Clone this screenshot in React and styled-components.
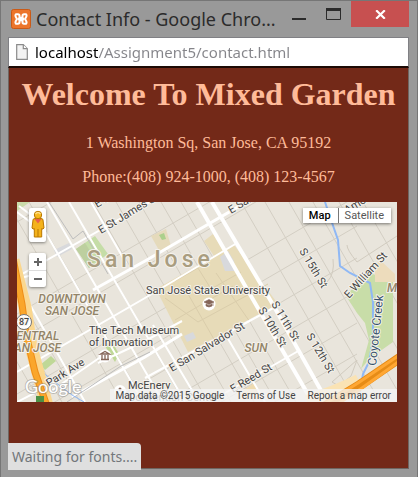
import React, { useState } from "react";
import styled, { createGlobalStyle } from "styled-components";

const GlobalStyle = createGlobalStyle`
  * { box-sizing: border-box; }
  body { margin: 0; background: #999999; }
  button, input { font: inherit; margin: 0; border: 0; padding: 0; }
`;

const Window = styled.div`
  position: relative;
  display: flex;
  flex-direction: column;
  min-height: 100vh;
  padding: 0 8px 8px 7px;
  border: 1px solid #767676;
  background: #999999;
`;

const TitleBar = styled.header`
  display: flex;
  align-items: flex-start;
  height: 36px;
  padding-left: 3px;
`;

const AppIcon = styled.svg`
  flex: none;
  width: 20px;
  height: 20px;
  margin-top: 8px;
`;

const Title = styled.div`
  flex: 1;
  min-width: 0;
  overflow: hidden;
  padding: 5px 0 0 5px;
  font: 18px/26px "Noto Sans", sans-serif;
  white-space: nowrap;
  color: #2b2b2b;
`;

const WindowButton = styled.button`
  flex: none;
  display: flex;
  align-items: center;
  justify-content: center;
  width: ${(p) => (p.$close ? 58 : 35)}px;
  height: 26px;
  background: ${(p) => (p.$close ? "#c75050" : "transparent")};
`;

const AddressBar = styled.form`
  display: flex;
  align-items: center;
  height: 31px;
  padding: 0 7px;
  border: 1px solid #808084;
  border-bottom: 2px solid #1c0a05;
  background: #ffffff;
`;

const AddressInput = styled.input`
  flex: 1;
  min-width: 0;
  margin-left: 7px;
  outline: 0;
  font: 15px/22px "Noto Sans", sans-serif;
  color: transparent;
  background: linear-gradient(90deg, #000000 63px, #85858a 63px);
  background-clip: text;
  -webkit-background-clip: text;
`;

const Page = styled.main`
  flex: 1;
  padding: 8px 8px 66px;
  border: 1px solid #6f6661;
  border-top: 0;
  background: #732918;
  color: #ffbb99;
  font: 16px/18px "Liberation Serif", serif;
  text-align: center;
`;

const Heading = styled.h1`
  margin: 0 -8px 21px;
  font-size: 32px;
  line-height: 37px;
  white-space: nowrap;
`;

const Line = styled.p`
  margin: 0 0 16px;
`;

const MapFrame = styled.section`
  position: relative;
  max-width: 380px;
  height: 200px;
  overflow: hidden;
  background: #e9e5dc;
  color: #444444;
  font: 11px/14px Roboto, sans-serif;
`;

const MapArt = styled.svg`
  display: block;
  width: 380px;
  height: 200px;
`;

const Controls = styled.div`
  position: absolute;
  top: 6px;
  left: 12px;
  display: flex;
  flex-direction: column;
  gap: 11px;
`;

const ControlGroup = styled.div`
  display: flex;
  flex-direction: column;
  width: 17px;
  border-radius: 2px;
  background: #ffffff;
  box-shadow: 0 1px 3px rgba(0, 0, 0, 0.45);
`;

const ControlButton = styled.button`
  display: flex;
  align-items: center;
  justify-content: center;
  height: ${(p) => (p.$tall ? 34 : 17)}px;
  background: transparent;

  & + & { border-top: 1px solid #dddddd; }
`;

const MapTypes = styled.div`
  position: absolute;
  top: 6px;
  right: 6px;
  display: flex;
  background: #ffffff;
  box-shadow: 0 1px 3px rgba(0, 0, 0, 0.5);
`;

const TypeButton = styled.button`
  height: 15px;
  padding: 0 7px 0 6px;
  background: #ffffff;
  color: ${(p) => (p.$active ? "#000000" : "#565656")};
  font-weight: ${(p) => (p.$active ? 500 : 400)};

  & + & { border-left: 1px solid #777777; }
`;

const Credits = styled.footer`
  position: absolute;
  right: 0;
  bottom: 0;
  display: flex;
  gap: 12px;
  padding: 0 6px 0 5px;
  background: rgba(245, 245, 245, 0.78);
  font-size: 10px;
  line-height: 13px;
  white-space: nowrap;
`;

const CreditLink = styled.a`
  color: #444444;
  text-decoration: none;
`;

const Status = styled.div`
  position: absolute;
  left: 7px;
  bottom: 7px;
  padding: 0 4px;
  border-top-right-radius: 4px;
  background: #dfdfdf;
  color: #73777b;
  font: 14px/27px "Noto Sans", sans-serif;
`;

const Block = styled.path`
  fill: ${(p) => p.$fill};
`;

const Road = styled.path`
  fill: none;
  stroke: ${(p) => p.$color || "#ffffff"};
  stroke-width: ${(p) => p.$w || 2};
`;

const MapLabel = styled.text`
  font-family: Roboto, sans-serif;
  font-size: ${(p) => p.$size || 11}px;
  font-weight: ${(p) => p.$weight || 400};
  font-style: ${(p) => (p.$italic ? "italic" : "normal")};
  letter-spacing: ${(p) => (p.$tracked ? "4px" : "normal")};
  fill: ${(p) => p.$fill || "#444444"};
  stroke: #f5f2ec;
  stroke-width: 2px;
  stroke-linejoin: round;
  paint-order: stroke;
`;

const streetLabels = [
  ["E St James St", 84, 32, -31],
  ["E San Fernando St", 214, 12, -31],
  ["E St John St", 80, 6, -31],
  ["S 15th St", 282, 49, 59],
  ["E William St", 332, 97, -48],
  ["S 11th St", 254, 102, 59],
  ["S 10th St", 241, 108, 59],
  ["S 12th St", 289, 134, 59],
  ["E San Salvador St", 155, 170, -31],
  ["E Reed St", 216, 191, -31],
  ["Park Ave", 32, 185, -32],
];

const districtLabels = [
  ["DOWNTOWN", 55, 101],
  ["SAN JOSE", 55, 113],
  ["CENTRAL", 17, 138],
  ["SAN JOSE", 17, 150],
  ["SUN", 239, 150],
];

function XamppIcon() {
  return (
    <AppIcon viewBox="0 0 20 20" aria-hidden="true">
      <rect x="0.5" y="0.5" width="19" height="19" rx="2" fill="#ec752b" stroke="#c95a17" />
      <path
        d="M5 5.2 H7 Q8.5 5.2 8.5 7 V8.8 H11.5 V7 Q11.5 5.2 13 5.2 H15 Q16 6.2 15.4 7.6 L14 10 L15.4 12.4 Q16 13.8 15 14.8 H13 Q11.5 14.8 11.5 13 V11.2 H8.5 V13 Q8.5 14.8 7 14.8 H5 Q4 13.8 4.6 12.4 L6 10 L4.6 7.6 Q4 6.2 5 5.2 Z"
        fill="none"
        stroke="#ffffff"
        strokeWidth="2"
        strokeLinejoin="round"
      />
      <path d="M7 10 H13" stroke="#ffffff" strokeWidth="2.6" />
    </AppIcon>
  );
}

function PageIcon() {
  return (
    <svg width="12" height="16" viewBox="0 0 12 16" aria-hidden="true">
      <path d="M0.7 0.7 H7.3 L11.3 4.7 V15.3 H0.7 Z" fill="#f3f3f3" stroke="#8b8b8b" strokeWidth="1.2" />
      <path d="M7.3 0.7 V4.7 H11.3" fill="#ffffff" stroke="#8b8b8b" strokeWidth="1.2" />
    </svg>
  );
}

function Pegman() {
  return (
    <svg width="14" height="30" viewBox="0 0 14 30" aria-hidden="true">
      <path d="M2 10 Q2 8.5 4 8.5 H10 Q12 8.5 12 10 L13 18 Q12 20 10.7 18.5 V27 H3.3 V18.5 Q2 20 1 18 Z" fill="#f4b21b" stroke="#b97800" />
      <path d="M7 19 V27" stroke="#b97800" />
      <path d="M3.5 9 H10.5 L7 13.5 Z" fill="#e8604c" />
      <circle cx="7" cy="5" r="3.7" fill="#f7b91e" stroke="#b97800" />
      <path d="M4.5 4 Q7 1 9.5 4" fill="none" stroke="#ffe08a" strokeWidth="1.4" />
    </svg>
  );
}

function CityMap() {
  const minorNe = [-40, -10, 20, 112, 139, 192, 222, 254, 287, 319, 350, 382, 410];
  const minorSe = [-92, -70, -52, -10, 12, 52, 76, 99, 122, 144, 164, 224, 248, 272, 296, 322, 346];
  return (
    <MapArt viewBox="0 0 380 200" role="img" aria-label="Map of downtown San Jose">
      <Block $fill="#e9e5dc" d="M0 0H380V200H0Z" />
      {minorNe.map((y) => (
        <Road key={y} $color="#d3cec3" $w={1} d={`M0 ${y} L340 ${y - 198}`} />
      ))}
      {minorSe.map((x) => (
        <Road key={x} $color="#d3cec3" $w={1} d={`M${x} 0 L${x + 115} 200`} />
      ))}
      <Block $fill="#cbdcab" d="M0 0H13L0 9Z" />
      <Block $fill="#c5dda7" d="M59 47L78 34L91 52L72 66Z" />
      <Block $fill="#bdcf9f" d="M59 47L68 41L79 58L72 66Z" />
      <Block $fill="#d8d9dc" d="M37 48L52 41L55 47L40 55Z" />
      <Block $fill="#e5dabb" d="M134 34L149 27L154 44L143 50Z" />
      <path d="M142 33L147 31L149 37L145 38Z" fill="#acd08c" />
      <Block $fill="#e7dbb8" d="M187 39L196 32L210 51L199 57Z" />
      <Block $fill="#e7dbb8" d="M217 43L139 87L171 150L261 102Z" />
      <Block $fill="#d8d9dc" d="M203 55L211 49L217 59L218 69L208 69Z" />
      <Block $fill="#d8d9dc" d="M167 134L176 130L179 136L170 140Z" />
      <path d="M158 79L181 66L194 87L224 70M148 96L181 120L251 82M171 92L198 139M199 71L233 120M158 118L216 84" fill="none" stroke="#dacdab" />
      <Block $fill="#c8dda8" d="M350 70L376 79V140L352 157L344 167L352 138L348 121L340 111L329 94Z" />
      <Block $fill="#eddcbc" d="M358 64L363 58L378 72V80H358Z" />
      <Block $fill="#bfd897" d="M23 163L34 154L39 159L28 168Z" />
      <Block $fill="#bfd897" d="M88 144L94 138L102 152L98 160Z" />
      <Block $fill="#eedbb1" d="M227 188L237 181L246 197H222Z" />
      <Road $color="#d1cbbf" $w={1} d="M330 43Q330 48 340 60L380 34M310 80Q318 72 316 57M315 180L340 158L334 174L322 184Z" />

      <Road d="M0 75L133 0M0 170L128 96L220 41M0 200L43 178M128 176L258 105M208 191L283 148M81 161L128 139L165 119M30 192L88 152" />
      <Road $w={3} d="M76 88L128 59L238 -5M55 195L128 155L165 132" />
      <Road d="M30 0L146 200M52 0L168 200M74 0L109 61M2 4L22 19L72 106L126 200M0 80L68 200M136 123L182 200M210 135L248 200M0 10L24 28M0 77L15 73" />
      <Road $w={4} d="M180 0L238 101L296 201M195 0L255 101L311 201" />
      <Road $w={1} $color="#bdbdbd" d="M32 0L56 37L66 29L91 72M50 200L104 164L133 150" />
      <Road $w={1} $color="#8fb8f5" d="M21 167L55 193L67 200" />
      <Road $w={2} $color="#8fb8f5" d="M308 0L312 12L321 38L323 64L333 71L353 81L356 100L356 138L352 160L346 172L343 190" />
      <Road $w={13} $color="#fbd78e" d="M-4 58L8 105L14 145L30 204" />
      <Road $w={7} $color="#ed8d19" d="M-5 51L5 102L9 132L18 170L30 204" />
      <Road $w={5} $color="#faa62b" d="M-5 51L5 102L9 132L18 170L30 204" />
      <Road $w={14} $color="#fae3b4" d="M290 200Q320 190 342 179" />
      <Road $w={10} $color="#e68c17" d="M384 155L343 183L307 205" />
      <Road $w={3} $color="#ffa733" d="M384 152L341 181L306 203M384 158L345 186L315 206" />

      {streetLabels.map(([name, x, y, angle]) => (
        <MapLabel key={name} transform={`translate(${x} ${y}) rotate(${angle})`}>{name}</MapLabel>
      ))}
      <MapLabel transform="translate(330 12) rotate(-31)">Ames</MapLabel>
      <MapLabel $size={12} $fill="#35516b" transform="translate(359 164) rotate(-84)">Coyote Creek</MapLabel>
      <MapLabel $size={23} $weight={500} $fill="#a99d80" $tracked x="70" y="65">San Jose</MapLabel>
      <g textAnchor="middle">
        {districtLabels.map(([name, x, y]) => (
          <MapLabel key={`${name}-${y}`} $size={12} $italic $weight={500} $fill="#928468" x={x} y={y}>{name}</MapLabel>
        ))}
      </g>
      <MapLabel $size={12} $italic $weight={500} $fill="#928468" x="370" y="90">M</MapLabel>
      <MapLabel x="129" y="92">San José State University</MapLabel>
      <MapLabel x="72" y="132">The Tech Museum</MapLabel>
      <MapLabel x="72" y="144">of Innovation</MapLabel>
      <MapLabel x="111" y="187">McEnery</MapLabel>
      <MapLabel x="111" y="199">Convention Center</MapLabel>
      <circle cx="192" cy="102" r="6.5" fill="#ffffff" />
      <path d="M187 100L192 97.5L197 100L192 102.5ZM189 102V104Q192 106 195 104V102L192 103.5ZM196 100.5V104" fill="#856659" stroke="#856659" strokeWidth="0.6" />
      <circle cx="88" cy="154" r="6.5" fill="#ffffff" />
      <path d="M83.5 152L88 149.5L92.5 152ZM84 157.5H92M85 153V157M88 153V157M91 153V157" fill="none" stroke="#856659" strokeWidth="1.3" />
      <circle cx="103" cy="189" r="6" fill="#ffffff" />
      <circle cx="103" cy="187" r="1.5" fill="#856659" />
      <circle cx="7" cy="120" r="7.5" fill="#ffffff" stroke="#777777" />
      <MapLabel $size={9} $weight={500} x="2" y="123">87</MapLabel>
      <rect x="19" y="194" width="8" height="7" fill="#4d9145" />
      <text x="8" y="191" fontFamily="Lato, sans-serif" fontSize="18" fill="#ffffff" stroke="#88888877" strokeWidth="2" paintOrder="stroke">Google</text>
    </MapArt>
  );
}

export default function App() {
  const [address, setAddress] = useState("localhost/Assignment5/contact.html");
  const [mapType, setMapType] = useState("Map");
  return (
    <>
      <GlobalStyle />
      <Window>
        <TitleBar>
          <XamppIcon />
          <Title>Contact Info - Google Chro...</Title>
          <WindowButton aria-label="Minimize">
            <svg width="14" height="12" viewBox="0 0 14 12"><path d="M0 11H14" stroke="#2b2b2b" strokeWidth="2" /></svg>
          </WindowButton>
          <WindowButton aria-label="Maximize">
            <svg width="15" height="12" viewBox="0 0 15 12"><path d="M0.5 0V11.5H14.5V0" fill="none" stroke="#2b2b2b" /><path d="M0 1.5H15" stroke="#2b2b2b" strokeWidth="3" /></svg>
          </WindowButton>
          <WindowButton $close aria-label="Close">
            <svg width="11" height="9" viewBox="0 0 11 9"><path d="M1.2 0.3L9.8 8.7M9.8 0.3L1.2 8.7" stroke="#ffffff" strokeWidth="2.2" /></svg>
          </WindowButton>
        </TitleBar>
        <AddressBar onSubmit={(e) => e.preventDefault()}>
          <PageIcon />
          <AddressInput
            aria-label="Address"
            spellCheck={false}
            value={address}
            onChange={(e) => setAddress(e.target.value)}
          />
        </AddressBar>
        <Page>
          <Heading>Welcome To Mixed Garden</Heading>
          <Line>1 Washington Sq, San Jose, CA 95192</Line>
          <Line>Phone:(408) 924-1000, (408) 123-4567</Line>
          <MapFrame>
            <CityMap />
            <Controls>
              <ControlGroup>
                <ControlButton $tall aria-label="Street View"><Pegman /></ControlButton>
              </ControlGroup>
              <ControlGroup>
                <ControlButton aria-label="Zoom in">
                  <svg width="8" height="8" viewBox="0 0 8 8"><path d="M0 4H8M4 0V8" stroke="#666666" strokeWidth="2" /></svg>
                </ControlButton>
                <ControlButton aria-label="Zoom out">
                  <svg width="8" height="8" viewBox="0 0 8 8"><path d="M0 4H8" stroke="#666666" strokeWidth="2" /></svg>
                </ControlButton>
              </ControlGroup>
            </Controls>
            <MapTypes>
              {["Map", "Satellite"].map((type) => (
                <TypeButton key={type} $active={mapType === type} onClick={() => setMapType(type)}>{type}</TypeButton>
              ))}
            </MapTypes>
            <Credits>
              <span>Map data ©2015 Google</span>
              <CreditLink href="#terms">Terms of Use</CreditLink>
              <CreditLink href="#report">Report a map error</CreditLink>
            </Credits>
          </MapFrame>
        </Page>
        <Status role="status">Waiting for fonts....</Status>
      </Window>
    </>
  );
}
